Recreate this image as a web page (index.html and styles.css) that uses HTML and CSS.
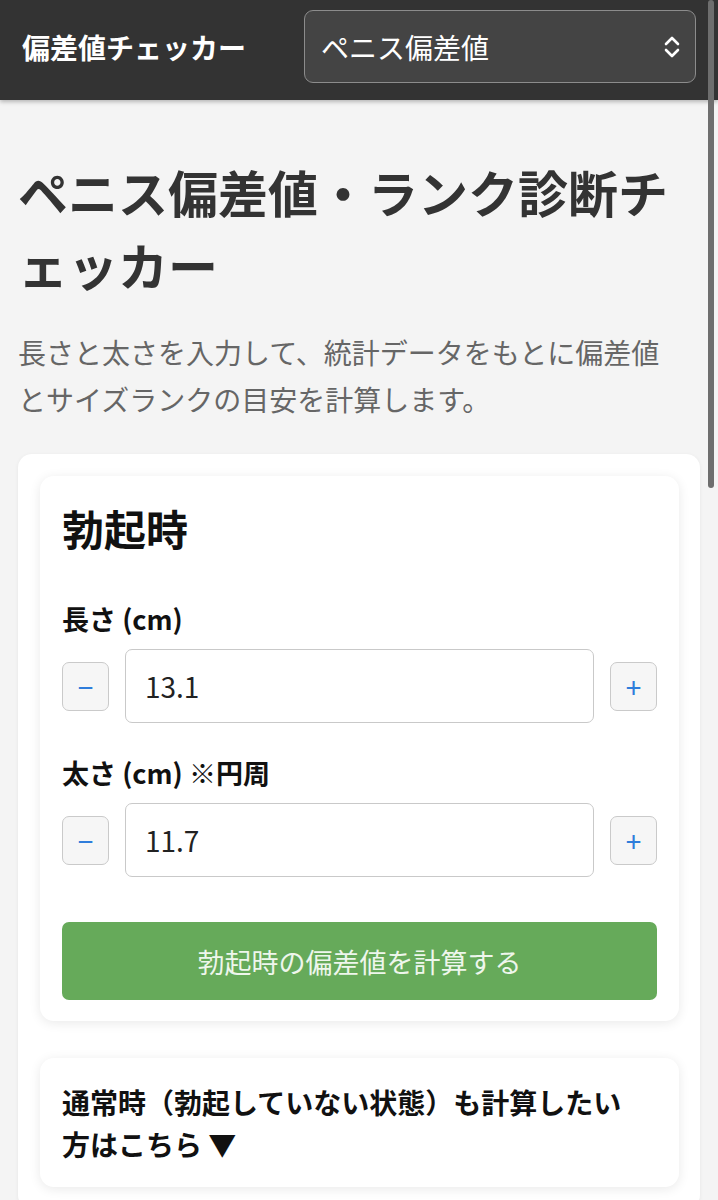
FILE: index.html
```html
<!DOCTYPE html>
<html lang="ja">
<head>
  <meta charset="UTF-8" />
  <meta name="viewport" content="width=device-width, initial-scale=1.0"/>
  <title>ペニス偏差値・ランク診断チェッカー</title>
  <link rel="stylesheet" href="styles.css">
</head>
<body>
  <header class="topbar">
    <span class="logo">偏差値チェッカー</span>
    <div class="picker">
      <select class="picker-select">
        <option>ペニス偏差値</option>
      </select>
      <svg class="picker-icon" width="18" height="24" viewBox="0 0 18 24" fill="none" stroke="#fff" stroke-width="2.6" stroke-linecap="round" stroke-linejoin="round">
        <path d="M3 9 L9 3 L15 9"/>
        <path d="M3 15 L9 21 L15 15"/>
      </svg>
    </div>
  </header>

  <main class="page">
    <h1>ペニス偏差値・ランク診断チェッカー</h1>
    <p class="lead">長さと太さを入力して、統計データをもとに偏差値とサイズランクの目安を計算します。</p>

    <section class="panel">
      <div class="card">
        <h2>勃起時</h2>
        <label class="field-label" for="len">長さ (cm)</label>
        <div class="stepper">
          <button class="step" type="button">&minus;</button>
          <input id="len" class="num" type="text" value="13.1">
          <button class="step" type="button">+</button>
        </div>
        <label class="field-label second" for="thick">太さ (cm) ※円周</label>
        <div class="stepper">
          <button class="step" type="button">&minus;</button>
          <input id="thick" class="num" type="text" value="11.7">
          <button class="step" type="button">+</button>
        </div>
        <button class="calc" type="button">勃起時の偏差値を計算する</button>
      </div>

      <details class="card more">
        <summary>通常時（勃起していない状態）も計算したい方はこちら ▼</summary>
      </details>
    </section>
  </main>

  <div class="scroll-indicator"></div>
</body>
</html>
```

FILE: styles.css
```css
body{margin:0;font-family:"Noto Sans CJK JP","Noto Sans",sans-serif;background:#f4f4f4;color:#111;line-break:loose;}

/* Header */
.topbar{height:100px;background:#333;display:flex;align-items:center;padding:10px 22px 17px;box-shadow:0 2px 4px rgba(0,0,0,0.25);box-sizing:border-box;}
.logo{color:#fff;font-size:28px;font-weight:700;}
.picker{position:relative;margin-left:auto;width:392px;height:73px;}
.picker-select{width:100%;height:73px;appearance:none;-webkit-appearance:none;background:#444;color:#fff;border:1.5px solid #8c8c8c;border-radius:9px;font-family:inherit;font-size:28px;padding:0 16px;}
.picker-icon{position:absolute;right:15px;top:25px;pointer-events:none;}

/* Page */
.page{padding:0 18px;}
h1{margin:55px 0 0;font-size:50px;line-height:72.5px;font-weight:700;color:#333;}
.lead{margin:29px 0 0;max-width:660px;font-size:28px;line-height:47px;color:#666;}

.panel{margin-top:31px;background:#fff;border-radius:14px;padding:22px 21px 22px 22px;box-shadow:0 1px 4px rgba(0,0,0,0.06);}
.card{background:#fff;border-radius:14px;box-shadow:0 2px 12px rgba(0,0,0,0.09);padding:24px 22px 21px;}
h2{margin:0;font-size:42px;line-height:56px;font-weight:700;}
.field-label{display:block;margin-top:43px;font-size:27px;line-height:40px;font-weight:700;}
.field-label.second{margin-top:30px;}

.stepper{display:flex;align-items:center;gap:16px;margin-top:10px;}
.step{width:47px;height:49px;flex:none;background:#f6f6f6;border:1.5px solid #cacaca;border-radius:7px;color:#2f7ddb;font-size:28px;font-family:inherit;padding:0;line-height:1;}
.num{flex:1;min-width:0;height:74px;box-sizing:border-box;border:1.5px solid #c9c9c9;border-radius:7px;padding:0 19px;font-family:inherit;font-size:28px;color:#222;background:#fff;}

.calc{display:block;width:100%;height:78px;margin-top:45px;background:#66aa5a;color:#eef6ec;border:none;border-radius:7px;font-family:inherit;font-size:27px;}

.more{margin-top:37px;padding:23px 40px 22px 22px;}
.more summary{list-style:none;font-size:28px;line-height:42px;font-weight:700;}
.more summary::-webkit-details-marker{display:none;}

/* iOS style scroll bar */
.scroll-indicator{position:fixed;top:0;right:4px;width:6px;height:488px;background:#6e6e6e;border-radius:3px;}
```
